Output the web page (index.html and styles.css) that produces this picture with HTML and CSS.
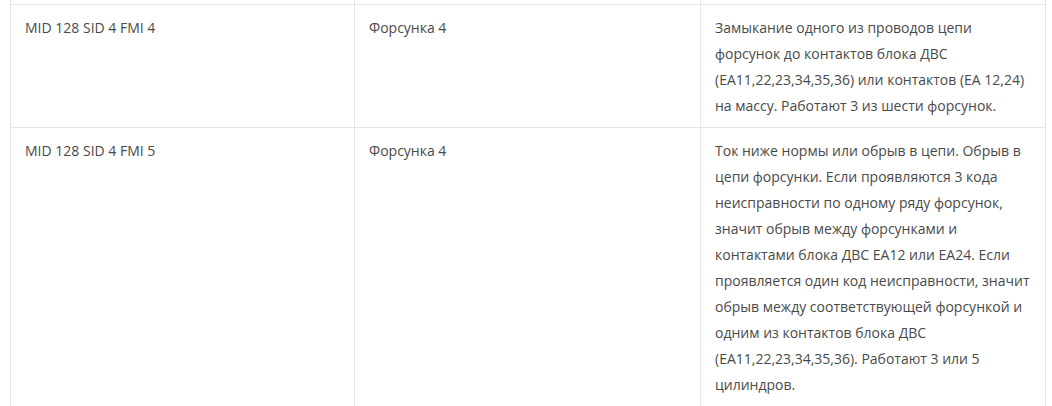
FILE: index.html
```html
<!DOCTYPE html>
<html lang="ru">
<head>
    <meta charset="UTF-8">
    <meta name="viewport" content="width=device-width, initial-scale=1.0">
    <title>Коды неисправностей</title>
    <link rel="stylesheet" href="styles.css">
</head>
<body>
    <table class="codes">
        <colgroup>
            <col class="col-code">
            <col class="col-part">
            <col class="col-desc">
        </colgroup>
        <tr class="tail-row">
            <td></td>
            <td></td>
            <td></td>
        </tr>
        <tr>
            <td>MID 128 SID 4 FMI 4</td>
            <td>Форсунка 4</td>
            <td>Замыкание одного из проводов цепи форсунок до контактов блока ДВС (EA11,22,23,34,35,36) или контактов (EA 12,24) на массу. Работают 3 из шести форсунок.</td>
        </tr>
        <tr>
            <td>MID 128 SID 4 FMI 5</td>
            <td>Форсунка 4</td>
            <td>Ток ниже нормы или обрыв в цепи. Обрыв в цепи форсунки. Если проявляются 3 кода неисправности по одному ряду форсунок, значит обрыв между форсунками и контактами блока ДВС EA12 или EA24. Если проявляется один код неисправности, значит обрыв между соответствующей форсункой и одним из контактов блока ДВС (EA11,22,23,34,35,36). Работают 3 или 5 цилиндров.</td>
        </tr>
    </table>
</body>
</html>
```

FILE: styles.css
```css
body {
    margin: 0;
    padding: 0;
    background: #ffffff;
    font-family: 'Open Sans', 'Noto Sans', sans-serif;
    font-size: 14px;
    line-height: 26px;
    color: #4a4a4a;
}
.codes {
    margin-left: 10px;
    width: 1035px;
    border-collapse: collapse;
    table-layout: fixed;
}
.col-code {
    width: 344px;
}
.col-part {
    width: 346px;
}
.col-desc {
    width: 345px;
}
.codes td {
    border: 1px solid #e6e6e6;
    padding: 10px 15px 8px 14px;
    vertical-align: top;
    text-align: left;
}
.codes .tail-row td {
    height: 4px;
    padding: 0;
    border-top: none;
}
```
